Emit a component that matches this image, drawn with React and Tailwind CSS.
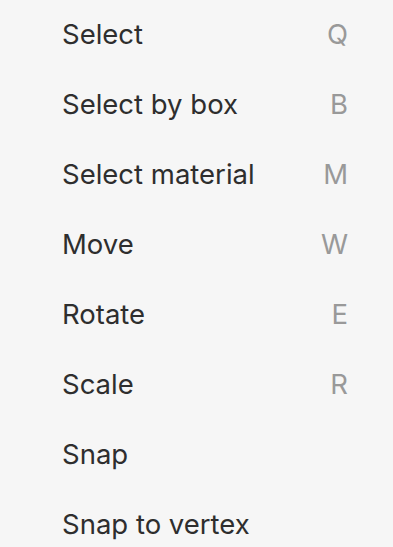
export default function App() {
  const items = [
    ["Select", "Q"],
    ["Select by box", "B"],
    ["Select material", "M"],
    ["Move", "W"],
    ["Rotate", "E"],
    ["Scale", "R"],
    ["Snap", ""],
    ["Snap to vertex", ""],
  ];
  return (
    <div
      className="w-[393px] h-[547px] overflow-hidden bg-[#f6f6f6]"
      style={{ fontFamily: "Inter, 'Noto Sans', sans-serif" }}
    >
      <div className="flex flex-col">
        {items.map(([label, key]) => (
          <div key={label} className="h-[70px] flex items-center justify-between pl-[62px] pr-[45px]">
            <span className="text-[27.5px] font-normal text-[#2e2e2e]">{label}</span>
            <span className="text-[27.5px] font-normal text-[#999999]">{key}</span>
          </div>
        ))}
      </div>
    </div>
  );
}
